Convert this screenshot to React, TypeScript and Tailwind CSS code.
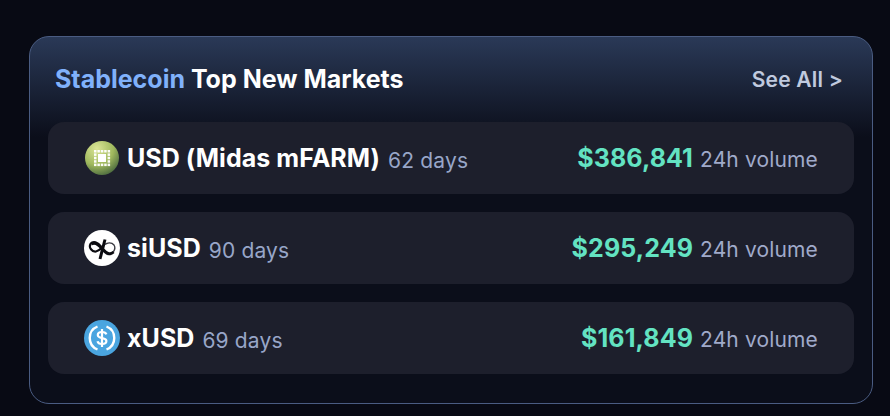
const rows = [
  { name: "USD (Midas mFARM)", days: "62 days", amount: "$386,841", icon: "farm" },
  { name: "siUSD", days: "90 days", amount: "$295,249", icon: "si" },
  { name: "xUSD", days: "69 days", amount: "$161,849", icon: "usdc" },
];

function FarmIcon() {
  const dots = [];
  for (let i = 0; i < 5; i++) {
    for (let j = 0; j < 5; j++) {
      if (i === 0 || j === 0 || i === 4 || j === 4) {
        dots.push(<rect key={`${i}-${j}`} x={9 + i * 3.4} y={9 + j * 3.4} width="2.5" height="2.5" fill="#fff" fillOpacity="0.95" />);
      }
    }
  }
  return (
    <svg width="34" height="34" viewBox="0 0 34 34">
      <defs>
        <radialGradient id="farm" cx="35%" cy="22%" r="88%">
          <stop offset="0" stopColor="#dbe596" />
          <stop offset="0.55" stopColor="#a0b95e" />
          <stop offset="1" stopColor="#3f5f3a" />
        </radialGradient>
      </defs>
      <circle cx="17" cy="17" r="17" fill="url(#farm)" />
      {dots}
      <rect x="13" y="13" width="8" height="8" fill="#fff" />
    </svg>
  );
}

function SiIcon() {
  return (
    <svg width="36" height="36" viewBox="0 0 36 36">
      <circle cx="18" cy="18" r="18" fill="#fff" />
      <path d="M18 17.5C21 12.5 27 11.5 30 15C32.5 19 28.5 25 24 24.5C21 24 19.5 21 18 19" fill="none" stroke="#3a3a42" strokeWidth="1.4" />
      <path d="M17 16.5C14 12 9 10.5 6.5 14C4.5 17.5 8 22 12 21.5C14.5 21 16 19.5 17.5 18" fill="none" stroke="#0b0b10" strokeWidth="2.2" />
      <path d="M7.5 14C11.5 11 16 16 19 19.5C22 23 26 25.5 29.5 22" fill="none" stroke="#0b0b10" strokeWidth="3" />
      <path d="M21 9.5L16 29" stroke="#0b0b10" strokeWidth="3" />
    </svg>
  );
}

function UsdcIcon() {
  return (
    <svg width="36" height="36" viewBox="0 0 36 36">
      <circle cx="18" cy="18" r="18" fill="#4aa5e0" />
      <path d="M13.5 6.5A12.4 12.4 0 0 0 13.5 29.5" fill="none" stroke="#fff" strokeWidth="2.4" />
      <path d="M22.5 6.5A12.4 12.4 0 0 1 22.5 29.5" fill="none" stroke="#fff" strokeWidth="2.4" />
      <path d="M22.4 14.4C21.9 12.8 20.2 12 18 12C15.4 12 13.8 13.3 13.8 15.1C13.8 19.4 22.4 17 22.4 21C22.4 22.8 20.6 24 18 24C15.6 24 13.9 23 13.5 21.3" fill="none" stroke="#fff" strokeWidth="2.2" />
      <path d="M18 9V27" stroke="#fff" strokeWidth="2.2" />
    </svg>
  );
}

function CoinIcon({ icon }: { icon: string }) {
  return (
    <span className="flex h-9 w-9 shrink-0 items-center justify-center">
      {icon === "farm" ? <FarmIcon /> : icon === "si" ? <SiIcon /> : <UsdcIcon />}
    </span>
  );
}

export default function App() {
  return (
    <div className="h-[416px] w-[890px] overflow-hidden bg-[#080a14] pl-[29px] pr-[17px] pt-9 font-['Inter',sans-serif]">
      <div className="h-[368px] rounded-[20px] border border-[#4a5c82] bg-[linear-gradient(180deg,#2a3957_0px,#0b0e1a_100px)] px-[18px]">
        <div className="flex h-[85px] items-center justify-between pl-[7px] pr-[11px]">
          <h2 className="text-[25px] font-bold text-white">
            <span className="text-[#80b1fb]">Stablecoin</span> Top New Markets
          </h2>
          <span className="text-[21px] font-semibold tracking-[0.2px] text-[#c0cadf]">See All &gt;</span>
        </div>
        <div className="flex flex-col gap-[18px]">
          {rows.map((row) => (
            <div key={row.name} className="flex h-[72px] items-center justify-between rounded-2xl bg-[#1d1f2c] pl-9 pr-9">
              <div className="flex items-center gap-[7px]">
                <CoinIcon icon={row.icon} />
                <span className="flex items-baseline gap-2 pt-[2px]">
                  <span className="text-[25px] font-bold tracking-[0.05px] text-white">{row.name}</span>
                  <span className="translate-y-px text-[21px] tracking-[0.15px] text-[#98a6c8]">{row.days}</span>
                </span>
              </div>
              <div className="flex items-baseline gap-[7px] pt-[2px]">
                <span className="text-[25px] font-bold tracking-[0.1px] text-[#63e3c2]">{row.amount}</span>
                <span className="text-[21px] tracking-[0.15px] text-[#a0aaca]">24h volume</span>
              </div>
            </div>
          ))}
        </div>
      </div>
    </div>
  );
}
